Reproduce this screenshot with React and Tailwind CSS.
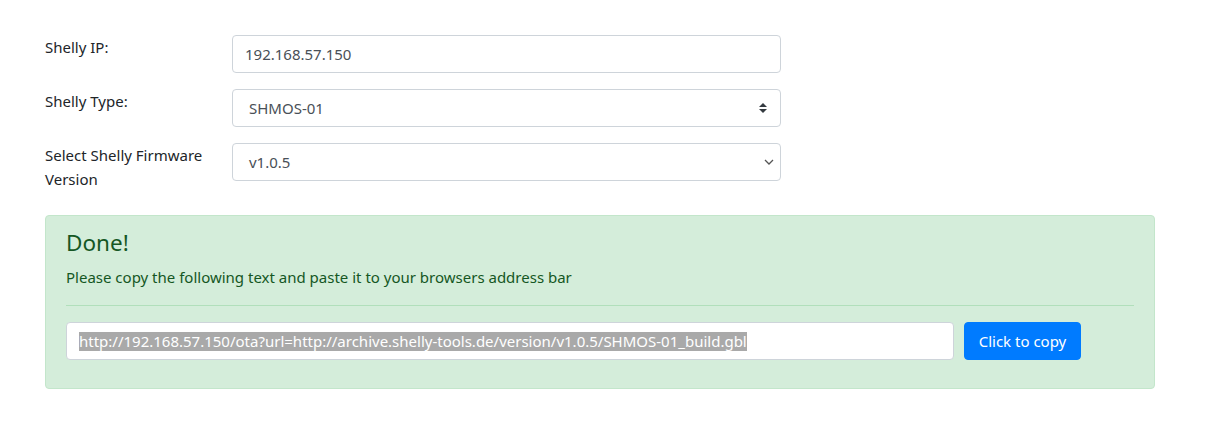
import React from "react";

const font = { fontFamily: '"Noto Sans", "Open Sans", sans-serif' };

function Row({ label, children }) {
  return (
    <div className="flex items-start mb-4">
      <label className="w-[172px] text-[15px] leading-6 text-[#212529] shrink-0">{label}</label>
      <div className="w-[549px] ml-[15px]">{children}</div>
    </div>
  );
}

export default function App() {
  return (
    <div className="w-[1206px] h-[434px] bg-white" style={font}>
      <div className="pl-[45px] pr-[51px] pt-[35px]">
        <Row label="Shelly IP:">
          <div className="h-[38px] border border-[#ced4da] rounded-[4px] px-3 flex items-center text-[15px] text-[#495057]">
            192.168.57.150
          </div>
        </Row>
        <Row label="Shelly Type:">
          <div className="h-[38px] border border-[#ced4da] rounded-[4px] pl-4 pr-3 flex items-center justify-between text-[15px] text-[#495057]">
            <span>SHMOS-01</span>
            <svg width="8" height="10" viewBox="0 0 4 5" className="mr-[1px]">
              <path d="M2 0L0 2h4zm0 5L0 3h4z" fill="#343a40" />
            </svg>
          </div>
        </Row>
        <div className="flex items-start mb-[24px]">
          <label className="w-[172px] text-[15px] leading-6 text-[#212529] shrink-0">
            Select Shelly Firmware Version
          </label>
          <div className="w-[549px] ml-[15px]">
            <div className="h-[38px] border border-[#ced4da] rounded-[4px] pl-4 pr-[6px] flex items-center justify-between text-[15px] text-[#495057]">
              <span>v1.0.5</span>
              <svg width="10" height="6" viewBox="0 0 10 6">
                <path d="M1 1l4 4 4-4" fill="none" stroke="#555" strokeWidth="1.3" />
              </svg>
            </div>
          </div>
        </div>
        <div className="w-[1110px] border border-[#c3e6cb] bg-[#d4edda] rounded-[4px] px-5 pt-3 pb-[28px] text-[#155724]">
          <h4 className="text-[22.5px] leading-[29px] mb-2">Done!</h4>
          <p className="text-[15px] leading-6">Please copy the following text and paste it to your browsers address bar</p>
          <div className="my-4 border-t border-[#b1dfbb]" />
          <div className="flex items-center">
            <div className="w-[888px] h-[38px] bg-white border border-[#ced4da] rounded-[4px] px-3 flex items-center text-[15px] overflow-hidden whitespace-nowrap">
              <span className="bg-[#a9a9a9] text-white leading-[19px]">
                http://192.168.57.150/ota?url=http://archive.shelly-tools.de/version/v1.0.5/SHMOS-01_build.gbl
              </span>
            </div>
            <button className="ml-[10px] w-[117px] h-[38px] bg-[#007bff] text-white rounded-[4px] text-[15px] border border-[#007bff]">
              Click to copy
            </button>
          </div>
        </div>
      </div>
    </div>
  );
}
